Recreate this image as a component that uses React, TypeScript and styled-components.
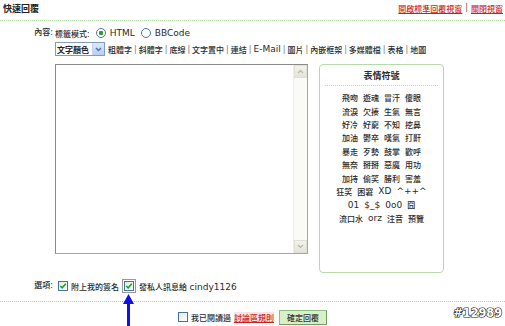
import React from "react";
import styled, { createGlobalStyle } from "styled-components";

const Global = createGlobalStyle`
  html, body { margin: 0; padding: 0; background: #fff; }
  body {
    font-family: "DejaVu Sans", Verdana, "Noto Sans CJK TC", sans-serif;
    font-size: 8px;
    font-weight: 500;
    color: #2a2a2a;
  }
`;

const Page = styled.div`
  position: relative;
  width: 505px;
  height: 326px;
  overflow: hidden;
`;

const Header = styled.div`
  display: flex;
  justify-content: space-between;
  align-items: center;
  height: 20px;
  padding: 0 2px 0 3px;
  border-bottom: 1px dotted #a9d39a;
`;

const Title = styled.div`
  font-weight: bold;
  font-size: 9px;
  color: #222;
  margin-top: -4px;
`;

const HeadLinks = styled.div`
  display: flex;
  gap: 3px;
  color: #555;
  margin-top: -4px;
`;

const RedLink = styled.a<{ $bg?: boolean }>`
  color: #cc1f1f;
  text-decoration: underline;
  background: ${(p) => (p.$bg ? "#fbe3e3" : "transparent")};
  cursor: pointer;
`;

const Form = styled.div`
  display: grid;
  grid-template-columns: 55px 1fr;
  padding-top: 6px;
`;

const Label = styled.div`
  text-align: right;
  padding-right: 2px;
  line-height: 12px;
  white-space: nowrap;
`;

const Body = styled.div`
  display: flex;
  flex-direction: column;
`;

const ModeRow = styled.div`
  display: flex;
  align-items: center;
  height: 12px;
  gap: 2px;
`;

const Radio = styled.span<{ $on?: boolean }>`
  display: inline-block;
  box-sizing: border-box;
  width: 10px;
  height: 10px;
  border-radius: 50%;
  border: 1px solid #4f7796;
  background: ${(p) =>
    p.$on ? "radial-gradient(circle, #2f9b36 0 2px, #fff 2.5px)" : "#fff"};
  margin: 0 2px 0 4px;
`;

const Latin = styled.span`
  font-family: "DejaVu Sans", Verdana, sans-serif;
  font-size: 9px;
  font-weight: normal;
`;

const ToolRow = styled.div`
  display: flex;
  align-items: center;
  height: 14px;
  margin-top: 3px;
  gap: 3px;
`;

const Select = styled.div`
  display: flex;
  align-items: center;
  box-sizing: border-box;
  width: 50px;
  height: 14px;
  border: 1px solid #7f9db9;
  background: #fff;
  font-weight: bold;
  color: #222;
  padding-left: 1px;
  justify-content: space-between;
  white-space: nowrap;
`;

const SelBtn = styled.span`
  display: flex;
  align-items: center;
  justify-content: center;
  width: 11px;
  height: 12px;
  background: linear-gradient(#dce8fd, #b7cdf7);
  border-left: 1px solid #c4d3f0;
`;

const ToolText = styled.span`
  display: flex;
  align-items: center;
  white-space: nowrap;
`;

const Sep = styled.span`
  color: #777;
  margin: 0 2px;
`;

const EditorRow = styled.div`
  display: flex;
  align-items: flex-start;
  gap: 11px;
  margin-top: 8px;
`;

const TextArea = styled.div`
  box-sizing: border-box;
  display: flex;
  justify-content: flex-end;
  width: 253px;
  height: 190px;
  border: 1px solid #a5a5a5;
  border-top-color: #8a8a8a;
  border-left-color: #8a8a8a;
  background: #fff;
`;

const Scroll = styled.div`
  display: flex;
  flex-direction: column;
  justify-content: space-between;
  width: 13px;
  background: #fafaf6;
  border-left: 1px solid #eeeee8;
`;

const ScrollBtn = styled.div`
  display: flex;
  align-items: center;
  justify-content: center;
  height: 13px;
  background: linear-gradient(#f3f3ec, #e4e4da);
  border: 1px solid #e0e0d6;
  box-sizing: border-box;
`;

const EmoBox = styled.div`
  box-sizing: border-box;
  width: 125px;
  height: 209px;
  border: 1px solid #b7dba8;
  border-radius: 4px;
  display: flex;
  flex-direction: column;
  align-items: center;
  padding: 5px 5px 0;
`;

const EmoTitle = styled.div`
  font-weight: bold;
  font-size: 9px;
  line-height: 12px;
  width: 100%;
  text-align: center;
  padding-bottom: 3px;
  border-bottom: 1px dotted #b7dba8;
`;

const EmoList = styled.div`
  display: flex;
  flex-direction: column;
  align-items: center;
  margin-top: 5px;
`;

const EmoLine = styled.div`
  display: flex;
  align-items: center;
  gap: 5px;
  height: 13.4px;
  white-space: nowrap;
`;

const OptRow = styled.div`
  display: grid;
  grid-template-columns: 55px 1fr;
  margin-top: 6px;
  height: 14px;
  align-items: center;
`;

const OptItems = styled.div`
  display: flex;
  align-items: center;
  gap: 3px;
`;

const CheckWrap = styled.span<{ $mark?: boolean }>`
  display: inline-flex;
  align-items: center;
  justify-content: center;
  box-sizing: border-box;
  width: ${(p) => (p.$mark ? "14px" : "auto")};
  height: ${(p) => (p.$mark ? "14px" : "auto")};
  border: ${(p) => (p.$mark ? "1px solid #9a9a9a" : "none")};
  margin-left: ${(p) => (p.$mark ? "0" : "3px")};
`;

const Box = styled.span`
  display: inline-flex;
  align-items: center;
  justify-content: center;
  box-sizing: border-box;
  width: 10px;
  height: 10px;
  border: 1px solid #46739a;
  background: linear-gradient(135deg, #e6e6e0, #fff);
`;

const Divider = styled.div`
  margin-top: 8px;
  border-top: 1px dotted #a9d39a;
`;

const Bottom = styled.div`
  display: flex;
  justify-content: center;
  align-items: center;
  gap: 3px;
  margin-top: 7px;
  height: 16px;
`;

const SubmitBtn = styled.button`
  box-sizing: border-box;
  height: 15px;
  padding: 0 7px;
  margin-left: 2px;
  font: inherit;
  color: #333;
  background: #d9efc9;
  border: 1px solid #8fbf7a;
  border-right-color: #6f9e5e;
  border-bottom-color: #6f9e5e;
`;

const Arrow = styled.svg`
  position: absolute;
  left: 123px;
  top: 294px;
`;

const Watermark = styled.div`
  position: absolute;
  right: 3px;
  bottom: 6px;
  font-family: "DejaVu Sans Condensed", "DejaVu Sans", sans-serif;
  font-weight: bold;
  font-size: 12.5px;
  color: #fff;
  -webkit-text-stroke: 1.2px #111;
  paint-order: stroke fill;
`;

const Check = () => (
  <svg width="8" height="8" viewBox="0 0 8 8">
    <path d="M1.3 4 L3.2 5.9 L6.8 1.8" fill="none" stroke="#21a121" strokeWidth="1.6" />
  </svg>
);

const isLatin = (s: string) => /^[\x00-\x7f]+$/.test(s);
const Word = ({ t }: { t: string }) => (isLatin(t) ? <Latin>{t}</Latin> : <span>{t}</span>);

const tools = ["粗體字", "斜體字", "底線", "文字置中", "連結", "E-Mail", "圖片", "內嵌框架", "多媒體檔", "表格", "地圖"];

const emos = [
  ["飛吻", "遊魂", "冒汗", "傻眼"],
  ["流淚", "欠揍", "生氣", "無言"],
  ["好冷", "好窮", "不知", "挖鼻"],
  ["加油", "鬱卒", "嘆氣", "打鼾"],
  ["暴走", "歹勢", "鼓掌", "歡呼"],
  ["無奈", "掰掰", "惡魔", "用功"],
  ["加持", "偷笑", "勝利", "害羞"],
  ["狂笑", "困窘", "XD", "^++^"],
  ["01", "$_$", "0o0", "囧"],
  ["流口水", "orz", "注音", "預覽"],
];

export default function App() {
  return (
    <Page>
      <Global />
      <Header>
        <Title>快速回覆</Title>
        <HeadLinks>
          <RedLink>開啟標準回覆視窗</RedLink>
          <span>|</span>
          <RedLink>關閉視窗</RedLink>
        </HeadLinks>
      </Header>
      <Form>
        <Label>內容:</Label>
        <Body>
          <ModeRow>
            <span>標籤模式:</span>
            <Radio $on />
            <Latin>HTML</Latin>
            <Radio />
            <Latin>BBCode</Latin>
          </ModeRow>
          <ToolRow>
            <Select>
              <span>文字顏色</span>
              <SelBtn>
                <svg width="7" height="5" viewBox="0 0 7 5">
                  <path d="M1 1 L3.5 3.5 L6 1" fill="none" stroke="#4d6fb8" strokeWidth="1.4" />
                </svg>
              </SelBtn>
            </Select>
            <ToolText>
              {tools.map((t, i) => (
                <React.Fragment key={t}>
                  {i > 0 && <Sep>|</Sep>}
                  <Word t={t} />
                </React.Fragment>
              ))}
            </ToolText>
          </ToolRow>
          <EditorRow>
            <TextArea>
              <Scroll>
                <ScrollBtn>
                  <svg width="7" height="5" viewBox="0 0 7 5">
                    <path d="M1 4 L3.5 1.5 L6 4" fill="none" stroke="#b8b8a8" strokeWidth="1.2" />
                  </svg>
                </ScrollBtn>
                <ScrollBtn>
                  <svg width="7" height="5" viewBox="0 0 7 5">
                    <path d="M1 1 L3.5 3.5 L6 1" fill="none" stroke="#b8b8a8" strokeWidth="1.2" />
                  </svg>
                </ScrollBtn>
              </Scroll>
            </TextArea>
            <EmoBox>
              <EmoTitle>表情符號</EmoTitle>
              <EmoList>
                {emos.map((row, i) => (
                  <EmoLine key={i}>
                    {row.map((e) => (
                      <Word key={e} t={e} />
                    ))}
                  </EmoLine>
                ))}
              </EmoList>
            </EmoBox>
          </EditorRow>
        </Body>
      </Form>
      <OptRow>
        <Label>選項:</Label>
        <OptItems>
          <CheckWrap>
            <Box>
              <Check />
            </Box>
          </CheckWrap>
          <span>附上我的簽名</span>
          <CheckWrap $mark>
            <Box>
              <Check />
            </Box>
          </CheckWrap>
          <span>
            發私人訊息給 <Latin>cindy1126</Latin>
          </span>
        </OptItems>
      </OptRow>
      <Divider />
      <Bottom>
        <Box />
        <span>我已閱讀過</span>
        <RedLink $bg>討論區規則</RedLink>
        <SubmitBtn>確定回覆</SubmitBtn>
      </Bottom>
      <Arrow width="11" height="32" viewBox="0 0 11 32">
        <path d="M5.5 0 L11 10 L7 10 L7 32 L4 32 L4 10 L0 10 Z" fill="#1010e8" />
      </Arrow>
      <Watermark>#12989</Watermark>
    </Page>
  );
}
